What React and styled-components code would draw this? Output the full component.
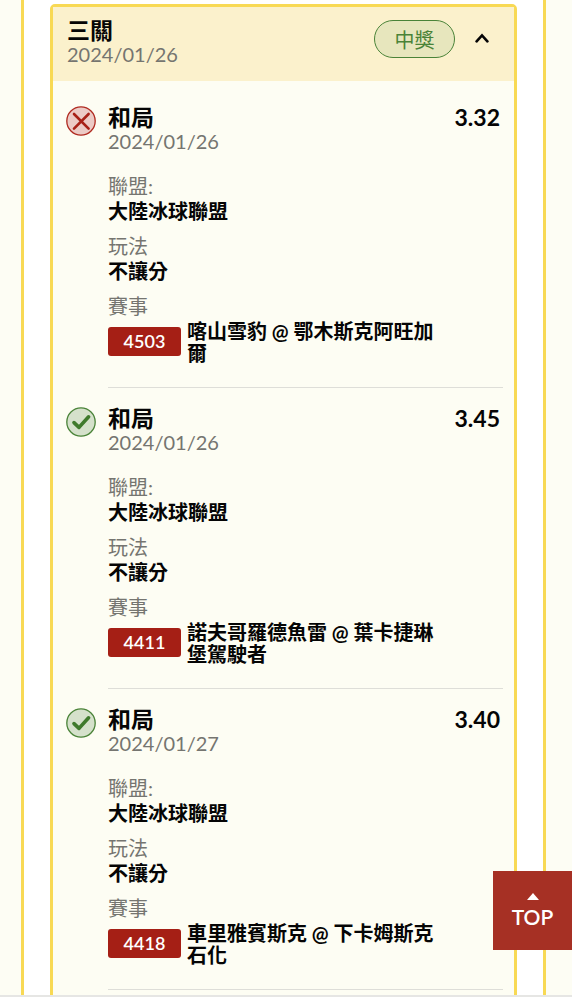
import React, { useState } from 'react';
import styled, { createGlobalStyle } from 'styled-components';

const GlobalStyle = createGlobalStyle`
* {
  box-sizing: border-box;
}
body {
  margin: 0;
  background-color: #ffffff;
  color: #050505;
  font-family: Lato, "Noto Sans CJK TC", sans-serif;
  font-size: 20px;
}
h2, h3, p, dl, dd, ul {
  margin: 0;
  padding: 0;
}
button {
  font-family: inherit;
  border: none;
  cursor: pointer;
}
`

const Screen = styled.div`
height: calc(100vh - 3px);
overflow: hidden;
background-color: #fdfdf4;
border-bottom: 2px solid #e6e6e4;
`

const Panel = styled.main`
min-height: 100%;
margin: 0 26px 0 21px;
padding: 4px 26px 40px;
background-color: #ffffff;
border: 3px solid #f8d954;
border-width: 0 3px;
`

const Ticket = styled.section`
background-color: #fdfdf3;
border: 3px solid #f8d954;
border-radius: 5px;
`

const TicketHeader = styled.header`
display: flex;
align-items: flex-start;
padding: 10px 18px 16px 14px;
background-color: #fbf1cc;
`

const Heading = styled.div`
flex: 1;
`

const TicketTitle = styled.h2`
font-size: 23px;
font-weight: 700;
line-height: 26px;
`

const BetTitle = styled.h3`
font-size: 23px;
font-weight: 700;
line-height: 26px;
`

const DateText = styled.p`
color: #757570;
font-size: 20px;
line-height: 22px;
`

const Status = styled.span`
display: flex;
align-items: center;
justify-content: center;
width: 81px;
height: 38px;
margin-top: 3px;
border: 1px solid #4a8338;
border-radius: 19px;
background-color: #e7e6bd;
color: #4a8338;
font-size: 20px;
`

const Toggle = styled.button`
display: flex;
align-items: center;
justify-content: center;
width: 28px;
height: 36px;
margin: 3px 0 0 13px;
padding: 0;
background-color: transparent;
color: #050505;
svg {
  transform: ${props => (props.$open ? 'none' : 'rotate(180deg)')};
}
`

const BetList = styled.ul`
padding: 6px 11px 40px 13px;
list-style: none;
`

const Bet = styled.li`
display: flex;
gap: 12px;
`

const Result = styled.svg`
flex: none;
width: 30px;
height: 30px;
margin-top: 19px;
`

const BetBody = styled.div`
flex: 1;
padding: 17px 0 23px;
border-bottom: 1px solid #deded8;
`

const BetHead = styled.div`
display: flex;
justify-content: space-between;
padding-right: 3px;
margin-bottom: 22px;
`

const Odds = styled.strong`
font-size: 23px;
font-weight: 700;
line-height: 26px;
`

const Details = styled.dl`
display: grid;
gap: 10px;
`

const Label = styled.dt`
color: #757570;
line-height: 25px;
`

const Value = styled.dd`
font-weight: 700;
line-height: 25px;
`

const Match = styled.dd`
display: flex;
align-items: center;
gap: 6px;
padding-top: 1px;
font-weight: 700;
line-height: 22px;
`

const Code = styled.span`
flex: none;
width: 73px;
margin-bottom: 2px;
border-radius: 3px;
background-color: #a51f15;
color: #ffffff;
font-size: 18px;
font-weight: 600;
line-height: 29px;
text-align: center;
`

const Teams = styled.span`
max-width: 256px;
`

const TopButton = styled.button`
position: fixed;
right: 0;
bottom: 50px;
display: flex;
flex-direction: column;
align-items: center;
justify-content: center;
gap: 5px;
width: 79px;
height: 79px;
padding: 0;
background-color: #a63024;
color: #ffffff;
font-size: 21px;
font-weight: 600;
line-height: 24px;
`

const bets = [
  { title: '和局', date: '2024/01/26', odds: '3.32', won: false, league: '大陸冰球聯盟', play: '不讓分', code: '4503', teams: '喀山雪豹 @ 鄂木斯克阿旺加爾' },
  { title: '和局', date: '2024/01/26', odds: '3.45', won: true, league: '大陸冰球聯盟', play: '不讓分', code: '4411', teams: '諾夫哥羅德魚雷 @ 葉卡捷琳堡駕駛者' },
  { title: '和局', date: '2024/01/27', odds: '3.40', won: true, league: '大陸冰球聯盟', play: '不讓分', code: '4418', teams: '車里雅賓斯克 @ 下卡姆斯克石化' },
]

function ResultIcon({ won }) {
  if (won) {
    return (
      <Result viewBox="0 0 30 30" fill="none" role="img" aria-label="過關">
        <circle cx="15" cy="15" r="14.2" fill="#d5e1cb" stroke="#4a8338" strokeWidth="1.3" />
        <path d="M8 15.6l5 4.8L22.6 9.8" stroke="#3f7a2c" strokeWidth="3.6" strokeLinecap="round" strokeLinejoin="round" />
      </Result>
    )
  }
  return (
    <Result viewBox="0 0 30 30" fill="none" role="img" aria-label="未過關">
      <circle cx="15" cy="15" r="14.2" fill="#eccbc6" stroke="#b02a20" strokeWidth="1.3" />
      <path d="M8 8l14.6 14.6M22.6 8L8 22.6" stroke="#a82117" strokeWidth="2.6" strokeLinecap="round" />
    </Result>
  )
}

function BetRow({ bet }) {
  return (
    <Bet>
      <ResultIcon won={bet.won} />
      <BetBody>
        <BetHead>
          <div>
            <BetTitle>{bet.title}</BetTitle>
            <DateText>{bet.date}</DateText>
          </div>
          <Odds>{bet.odds}</Odds>
        </BetHead>
        <Details>
          <div>
            <Label>聯盟:</Label>
            <Value>{bet.league}</Value>
          </div>
          <div>
            <Label>玩法</Label>
            <Value>{bet.play}</Value>
          </div>
          <div>
            <Label>賽事</Label>
            <Match>
              <Code>{bet.code}</Code>
              <Teams>{bet.teams}</Teams>
            </Match>
          </div>
        </Details>
      </BetBody>
    </Bet>
  )
}

export default function App() {
  const [open, setOpen] = useState(true)

  return (
    <Screen>
      <GlobalStyle />
      <Panel>
        <Ticket>
          <TicketHeader>
            <Heading>
              <TicketTitle>三關</TicketTitle>
              <DateText>2024/01/26</DateText>
            </Heading>
            <Status>中獎</Status>
            <Toggle type="button" $open={open} aria-expanded={open} aria-label="收合" onClick={() => setOpen(!open)}>
              <svg width="14" height="10" viewBox="0 0 14 10" fill="none">
                <path d="M1.6 8.4L7 2.4l5.4 6" stroke="currentColor" strokeWidth="2.6" strokeLinecap="round" />
              </svg>
            </Toggle>
          </TicketHeader>
          {open && (
            <BetList>
              {bets.map(bet => <BetRow key={bet.code} bet={bet} />)}
            </BetList>
          )}
        </Ticket>
      </Panel>
      <TopButton type="button" onClick={() => window.scrollTo(0, 0)}>
        <svg width="12" height="7" viewBox="0 0 12 7">
          <path d="M6 0l6 7H0z" fill="currentColor" />
        </svg>
        TOP
      </TopButton>
    </Screen>
  )
}
